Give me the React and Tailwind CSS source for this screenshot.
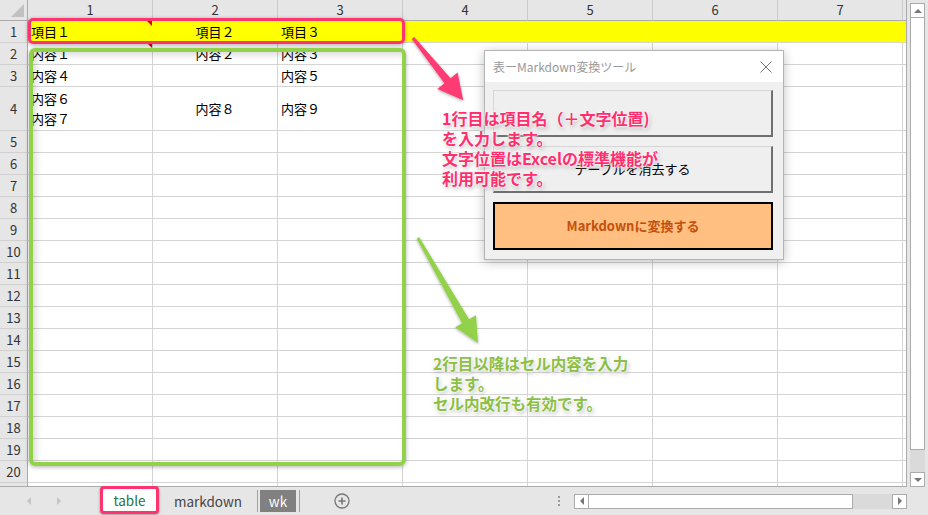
const COLS = [1, 2, 3, 4, 5, 6, 7, 8];

const rows = [
  { n: 1, h: 22, fill: true, cells: [{ t: '項目１' }, { t: '項目２', c: true }, { t: '項目３' }] },
  { n: 2, h: 22, cells: [{ t: '内容１' }, { t: '内容２', c: true }, { t: '内容３' }] },
  { n: 3, h: 22, cells: [{ t: '内容４' }, null, { t: '内容５' }] },
  { n: 4, h: 44, cells: [{ t: ['内容６', '内容７'] }, { t: '内容８', c: true }, { t: '内容９' }] },
];
for (let n = 5; n <= 21; n++) rows.push({ n, h: 22, cells: [] });

function Cell({ cell, fill, comment }) {
  const lines = cell ? (Array.isArray(cell.t) ? cell.t : [cell.t]) : [];
  return (
    <div
      className={`relative w-[125px] shrink-0 flex flex-col justify-center px-[3px] border-b border-r border-[#d4d4d4] ${
        fill ? 'bg-[#ffff00] border-r-[#ffff00]' : 'bg-white'
      } ${cell && cell.c ? 'items-center' : 'items-start'}`}
    >
      {lines.map((l, i) => (
        <span key={i} className="leading-[20px]">{l}</span>
      ))}
      {/* コメントの赤い三角 */}
      {comment && (
        <span className="absolute right-0 top-0 w-0 h-0 border-l-[5px] border-l-transparent border-t-[5px] border-t-[#e00000]" />
      )}
    </div>
  );
}

function Sheet() {
  return (
    <div className="w-[907px] h-[487px] overflow-hidden border-r border-b border-[#ababab] bg-white">
      <div className="flex h-[21px]">
        <div className="relative w-[28px] shrink-0 bg-[#e6e6e6] border-r border-b border-[#ababab]">
          <span className="absolute right-[3px] bottom-[3px] w-0 h-0 border-l-[13px] border-l-transparent border-b-[13px] border-b-[#c0c0c0]" />
        </div>
        {COLS.map((c) => (
          <div
            key={c}
            className="w-[125px] shrink-0 flex items-center justify-center bg-[#e6e6e6] border-r border-r-[#cacaca] border-b border-b-[#ababab] text-[13px] text-[#333]"
          >
            {c < 8 ? c : ''}
          </div>
        ))}
      </div>
      {rows.map((r) => (
        <div key={r.n} className="flex text-[13px] text-black" style={{ height: r.h }}>
          <div className="w-[28px] shrink-0 flex items-center justify-center bg-[#e6e6e6] border-r border-r-[#ababab] border-b border-b-[#d0d0d0] text-[#333]">
            {r.n < 21 ? r.n : ''}
          </div>
          {COLS.map((c, i) => (
            <Cell key={c} cell={r.cells[i]} fill={r.fill} comment={i === 0 && (r.n === 1 || r.n === 2)} />
          ))}
        </div>
      ))}
    </div>
  );
}

function VScroll() {
  return (
    <div className="w-[21px] h-[487px] flex flex-col pl-[3px] pr-[3px] pt-[3px] bg-[#e6e6e6]">
      <div className="h-[15px] flex items-center justify-center bg-white border border-[#ababab]">
        <span className="w-0 h-0 border-l-[4px] border-r-[4px] border-b-[4px] border-l-transparent border-r-transparent border-b-[#777]" />
      </div>
      <div className="h-[432px] bg-white border-x border-b border-[#ababab]" />
      <div className="flex-1 bg-[#dadada]" />
      <div className="h-[15px] flex items-center justify-center bg-white border border-[#ababab]">
        <span className="w-0 h-0 border-l-[4px] border-r-[4px] border-t-[4px] border-l-transparent border-r-transparent border-t-[#777]" />
      </div>
    </div>
  );
}

function TabBar() {
  return (
    <div className="h-[28px] flex items-center bg-[#e6e6e6] text-[13.5px]">
      <div className="w-[100px] flex items-center">
        <span className="ml-[27px] w-0 h-0 border-t-[4px] border-b-[4px] border-r-[4px] border-t-transparent border-b-transparent border-r-[#c4c4c4]" />
        <span className="ml-[26px] w-0 h-0 border-t-[4px] border-b-[4px] border-l-[4px] border-t-transparent border-b-transparent border-l-[#c4c4c4]" />
      </div>
      <div className="w-[59px] h-[28px] -mt-[2px] flex items-center justify-center bg-white border-[3px] border-[#ff3370] rounded-[4px] text-[#1f7245] shadow-[0_1px_3px_rgba(0,0,0,0.35)]">
        table
      </div>
      <div className="w-[98px] flex justify-center text-[#444]">markdown</div>
      <div className="w-px h-[22px] bg-[#a0a0a0]" />
      <div className="ml-[2px] w-[36px] h-[22px] flex items-center justify-center bg-[#808080] text-white">wk</div>
      <div className="ml-[3px] w-px h-[22px] bg-[#a0a0a0]" />
      <svg className="ml-[34px]" width="16" height="16" viewBox="0 0 16 16">
        <circle cx="8" cy="8" r="7" fill="none" stroke="#777" strokeWidth="1.3" />
        <path d="M8 4.5v7M4.5 8h7" stroke="#777" strokeWidth="1.6" />
      </svg>
      <div className="ml-[208px] flex flex-col gap-[2px]">
        <span className="w-[2px] h-[2px] bg-[#9a9a9a]" />
        <span className="w-[2px] h-[2px] bg-[#9a9a9a]" />
        <span className="w-[2px] h-[2px] bg-[#9a9a9a]" />
      </div>
      <div className="ml-[14px] w-[333px] h-[15px] flex">
        <div className="w-[15px] flex items-center justify-center bg-white border border-[#ababab]">
          <span className="w-0 h-0 border-t-[4px] border-b-[4px] border-r-[4px] border-t-transparent border-b-transparent border-r-[#777]" />
        </div>
        <div className="w-[264px] bg-white border-y border-r border-[#ababab]" />
        <div className="flex-1 bg-[#dadada]" />
        <div className="w-[15px] flex items-center justify-center bg-white border border-[#ababab]">
          <span className="w-0 h-0 border-t-[4px] border-b-[4px] border-l-[4px] border-t-transparent border-b-transparent border-l-[#777]" />
        </div>
      </div>
    </div>
  );
}

function Dialog() {
  const btn = 'mx-[8px] w-[280px] flex items-center justify-center text-[13px]';
  const bevel = 'bg-[#efefef] border-t border-l border-[#d6d6d6] border-b-2 border-r-2 border-b-[#707070] border-r-[#707070]';
  return (
    <div className="absolute left-[484px] top-[50px] w-[300px] h-[210px] flex flex-col bg-[#f0f0f0] border border-[#b4b4b4] shadow-[0_2px_10px_rgba(0,0,0,0.25)]">
      <div className="h-[31px] flex items-center justify-between px-[8px] bg-white">
        <span className="text-[12px] text-[#999]">表ーMarkdown変換ツール</span>
        <svg width="12" height="12" viewBox="0 0 12 12" className="mr-[3px]">
          <path d="M0.5 0.5L11.5 11.5M11.5 0.5L0.5 11.5" stroke="#777" strokeWidth="1" />
        </svg>
      </div>
      <div className={`${btn} ${bevel} mt-[8px] h-[47px]`} />
      <div className={`${btn} ${bevel} mt-[9px] h-[47px] text-black`}>テーブルを消去する</div>
      <div className={`${btn} mt-[9px] h-[48px] bg-[#ffbf80] border-2 border-black font-bold text-[13.5px] text-[#c4500c]`}>
        Markdownに変換する
      </div>
    </div>
  );
}

function Arrows() {
  return (
    <svg className="absolute inset-0 pointer-events-none" width="928" height="515">
      <defs>
        <filter id="sh" x="-20%" y="-20%" width="140%" height="140%">
          <feDropShadow dx="0" dy="1" stdDeviation="1.5" floodColor="#000" floodOpacity="0.35" />
        </filter>
      </defs>
      <polygon
        points="414.2,37.1 450.6,78.3 457.6,72.6 463.2,100.3 437.4,89 444.4,83.3 411.8,38.9"
        fill="#ff3a73"
        filter="url(#sh)"
      />
      <polygon
        points="419.3,237.3 469.1,319.3 476,315.3 478,343 455.2,327.3 462.1,323.3 416.7,238.7"
        fill="#92d14a"
        filter="url(#sh)"
      />
    </svg>
  );
}

export default function App() {
  const glow = '[text-shadow:0_0_2px_#fff,0_0_3px_#fff,0_0_4px_#fff,1px_2px_4px_rgba(0,0,0,0.35)]';
  return (
    <div className="relative w-[928px] h-[515px] overflow-hidden bg-[#e6e6e6] font-['Noto_Sans_CJK_JP',sans-serif]">
      <div className="flex">
        <Sheet />
        <VScroll />
      </div>
      <TabBar />

      <Dialog />

      {/* 注釈 */}
      <div className="absolute left-[28px] top-[18px] w-[377px] h-[26px] border-[3px] border-[#ff3370] rounded-[5px] shadow-[0_1px_4px_rgba(0,0,0,0.35)]" />
      <div className="absolute left-[29px] top-[48px] w-[377px] h-[418px] border-4 border-[#92d14a] rounded-[6px] shadow-[0_1px_4px_rgba(0,0,0,0.3),inset_3px_3px_6px_rgba(0,0,0,0.15)]" />
      <Arrows />

      <div className={`absolute left-[442px] top-[108px] text-[16px] leading-[20px] font-bold text-[#ff2f6e] ${glow}`}>
        <div>1行目は項目名（＋文字位置)</div>
        <div>を入力します。</div>
        <div>文字位置はExcelの標準機能が</div>
        <div>利用可能です。</div>
      </div>
      <div className={`absolute left-[433px] top-[353px] text-[15.5px] leading-[20px] font-bold text-[#8cbf45] ${glow}`}>
        <div>2行目以降はセル内容を入力</div>
        <div>します。</div>
        <div>セル内改行も有効です。</div>
      </div>
    </div>
  );
}
